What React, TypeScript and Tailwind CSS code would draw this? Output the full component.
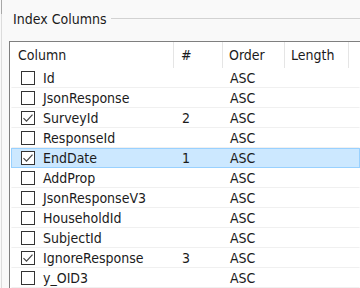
import React from 'react';

type Row = { name: string; checked: boolean; num?: string; order: string };

const rows: Row[] = [
  { name: 'Id', checked: false, order: 'ASC' },
  { name: 'JsonResponse', checked: false, order: 'ASC' },
  { name: 'SurveyId', checked: true, num: '2', order: 'ASC' },
  { name: 'ResponseId', checked: false, order: 'ASC' },
  { name: 'EndDate', checked: true, num: '1', order: 'ASC' },
  { name: 'AddProp', checked: false, order: 'ASC' },
  { name: 'JsonResponseV3', checked: false, order: 'ASC' },
  { name: 'HouseholdId', checked: false, order: 'ASC' },
  { name: 'SubjectId', checked: false, order: 'ASC' },
  { name: 'IgnoreResponse', checked: true, num: '3', order: 'ASC' },
  { name: 'y_OID3', checked: false, order: 'ASC' },
];

const CheckBox = ({ checked }: { checked: boolean }) => (
  <span className="w-[14px] h-[14px] border border-[#333] bg-white flex items-center justify-center shrink-0">
    {checked && (
      <svg width="12" height="12" viewBox="0 0 12 12" fill="none">
        <path d="M1.5 6.2 L4.5 9.2 L10.5 2.6" stroke="#444" strokeWidth="1.2" />
      </svg>
    )}
  </span>
);

export default function App() {
  const selected = 'EndDate';
  return (
    <div
      className="w-[360px] h-[288px] overflow-hidden bg-[#f9f9f9] relative text-[14px] leading-[18px] text-[#1b1b1b]"
      style={{ fontFamily: '"DejaVu Sans Condensed", "DejaVu Sans", Verdana, sans-serif' }}
    >
      <div className="absolute left-[1px] top-0 w-px h-[14px] bg-[#a8a8a8]" />
      <div className="h-full border-l border-[#dcdcdc] ml-px flex flex-col">
        {/* group title */}
        <div className="flex items-center h-[41px] pl-[11px] pt-[1px]">
          <span className="whitespace-nowrap">Index Columns</span>
          <div className="flex-1 ml-[5px] border-t border-[#d2d2d2]" />
        </div>

        {/* list */}
        <div className="ml-[7px] mt-[5px] flex-1 border-t border-l border-[#7f7f7f] bg-white">
          <div className="flex h-[26px] items-center">
            <div className="w-[164px] pl-[8px] h-full flex items-center border-r border-[#e5e5e5]">Column</div>
            <div className="w-[49px] pl-[7px] h-full flex items-center border-r border-[#e5e5e5]">#</div>
            <div className="w-[62px] pl-[6px] h-full flex items-center border-r border-[#e5e5e5]">Order</div>
            <div className="w-[64px] pl-[6px] h-full flex items-center border-r border-[#e5e5e5]">Length</div>
            <div className="flex-1" />
          </div>
          {rows.map((r) => {
            const isSel = r.name === selected;
            return (
              <div
                key={r.name}
                className={`flex h-[20px] items-center ml-[1px] border ${
                  isSel ? 'bg-[#cce8ff] border-[#99d1ff]' : 'border-transparent border-b-[#f0f0f0]'
                }`}
              >
                <div className="w-[163px] pl-[9px] flex items-center gap-[8px]">
                  <CheckBox checked={r.checked} />
                  <span className="whitespace-nowrap">{r.name}</span>
                </div>
                <div className="w-[49px] pl-[7px]">{r.num ?? ''}</div>
                <div className="w-[62px] pl-[6px]">{r.order}</div>
                <div className="flex-1" />
              </div>
            );
          })}
        </div>
      </div>
    </div>
  );
}
